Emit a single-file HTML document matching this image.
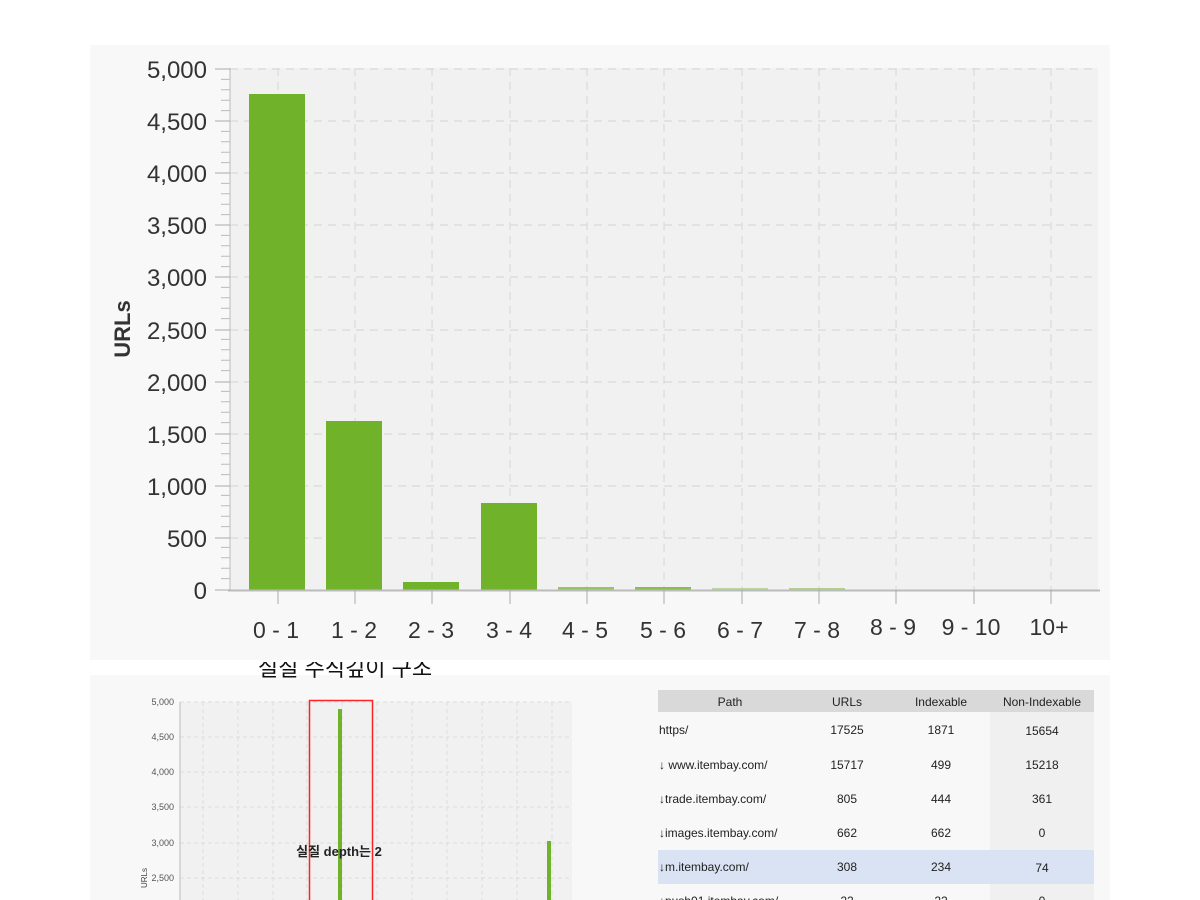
<!DOCTYPE html>
<html><head><meta charset="utf-8"><style>
body{margin:0;width:1200px;height:900px;background:#fff;overflow:hidden;position:relative;font-family:"Liberation Sans","Noto Sans CJK KR",sans-serif}
svg{position:absolute;left:0;top:0}
</style></head><body>
<svg width="1200" height="900" font-family="Liberation Sans, Noto Sans CJK KR, sans-serif">
<defs><clipPath id="tc"><rect x="90" y="662" width="600" height="20"/></clipPath></defs>
<!-- top card -->
<rect x="90" y="45" width="1020" height="615" fill="#f8f8f8"/>
<rect x="230" y="68" width="868" height="522" fill="#f1f1f1"/>
<g stroke="#dadada" stroke-width="1.2" stroke-dasharray="8,6">
<line x1="230" y1="69" x2="1098" y2="69"/><line x1="230" y1="121" x2="1098" y2="121"/><line x1="230" y1="173" x2="1098" y2="173"/><line x1="230" y1="225" x2="1098" y2="225"/><line x1="230" y1="277" x2="1098" y2="277"/><line x1="230" y1="330" x2="1098" y2="330"/><line x1="230" y1="382" x2="1098" y2="382"/><line x1="230" y1="434" x2="1098" y2="434"/><line x1="230" y1="486" x2="1098" y2="486"/><line x1="230" y1="538" x2="1098" y2="538"/>
<line x1="278" y1="68" x2="278" y2="590"/><line x1="355" y1="68" x2="355" y2="590"/><line x1="432" y1="68" x2="432" y2="590"/><line x1="510" y1="68" x2="510" y2="590"/><line x1="587" y1="68" x2="587" y2="590"/><line x1="664" y1="68" x2="664" y2="590"/><line x1="742" y1="68" x2="742" y2="590"/><line x1="819" y1="68" x2="819" y2="590"/><line x1="896" y1="68" x2="896" y2="590"/><line x1="974" y1="68" x2="974" y2="590"/><line x1="1051" y1="68" x2="1051" y2="590"/>
</g>
<g fill="#71b22b">
<rect x="249" y="94" width="56" height="496"/><rect x="326" y="421" width="56" height="169"/><rect x="403" y="582" width="56" height="8"/><rect x="481" y="503" width="56" height="87"/>
<rect x="558" y="587" width="56" height="3" opacity=".7"/><rect x="635" y="587" width="56" height="3" opacity=".8"/><rect x="712" y="588" width="56" height="2" opacity=".4"/><rect x="789" y="588" width="56" height="2" opacity=".5"/>
</g>
<line x1="230" y1="68" x2="230" y2="590" stroke="#bbb"/>
<line x1="228" y1="590.5" x2="1100" y2="590.5" stroke="#bbb" stroke-width="2"/>
<g stroke="#aaa">
<path d="M215 69h15M215 121h15M215 173h15M215 225h15M215 277h15M215 330h15M215 382h15M215 434h15M215 486h15M215 538h15M215 590h15"/>
<path d="M278 590v14M355 590v14M432 590v14M510 590v14M587 590v14M664 590v14M742 590v14M819 590v14M896 590v14M974 590v14M1051 590v14"/>
</g>
<g stroke="#bbb" id="minor"></g>
<path stroke="#bbb" d="M221 79.4h9M221 89.8h9M221 100.2h9M221 110.6h9M221 131.4h9M221 141.8h9M221 152.2h9M221 162.6h9M221 183.4h9M221 193.8h9M221 204.2h9M221 214.6h9M221 235.4h9M221 245.8h9M221 256.2h9M221 266.6h9M221 287.4h9M221 297.8h9M221 308.2h9M221 318.6h9M221 339.4h9M221 349.8h9M221 360.2h9M221 370.6h9M221 391.4h9M221 401.8h9M221 412.2h9M221 422.6h9M221 443.4h9M221 453.8h9M221 464.2h9M221 474.6h9M221 495.4h9M221 505.8h9M221 516.2h9M221 526.6h9M221 547.4h9M221 557.8h9M221 568.2h9M221 578.6h9"/>
<g fill="#333" font-size="24" text-anchor="end">
<text x="207" y="78">5,000</text><text x="207" y="130">4,500</text><text x="207" y="182">4,000</text><text x="207" y="234">3,500</text><text x="207" y="286">3,000</text><text x="207" y="339">2,500</text><text x="207" y="391">2,000</text><text x="207" y="443">1,500</text><text x="207" y="495">1,000</text><text x="207" y="547">500</text><text x="207" y="599">0</text>
</g>
<text transform="translate(130,329) rotate(-90)" text-anchor="middle" font-size="22" font-weight="bold" fill="#333">URLs</text>
<g fill="#333" font-size="23" text-anchor="middle">
<text x="276" y="638">0 - 1</text><text x="354" y="638">1 - 2</text><text x="431" y="638">2 - 3</text><text x="509" y="638">3 - 4</text><text x="585" y="638">4 - 5</text><text x="663" y="638">5 - 6</text><text x="740" y="638">6 - 7</text><text x="817" y="638">7 - 8</text><text x="893" y="635">8 - 9</text><text x="971" y="635">9 - 10</text><text x="1049" y="635">10+</text>
</g>
<!-- bottom card -->
<rect x="90" y="675" width="1020" height="225" fill="#f8f8f8"/>
<!-- clipped title -->
<g clip-path="url(#tc)"><text x="345" y="676" text-anchor="middle" font-size="22" fill="#111">실질 수직깊이 구조</text></g>
<rect x="180" y="702" width="392" height="198" fill="#f1f1f1"/>
<g stroke="#ddd" stroke-width="1" stroke-dasharray="4,3">
<line x1="180" y1="702" x2="572" y2="702"/><line x1="180" y1="737" x2="572" y2="737"/><line x1="180" y1="772" x2="572" y2="772"/><line x1="180" y1="807" x2="572" y2="807"/><line x1="180" y1="843" x2="572" y2="843"/><line x1="180" y1="878" x2="572" y2="878"/>
<line x1="203" y1="702" x2="203" y2="900"/><line x1="238" y1="702" x2="238" y2="900"/><line x1="273" y1="702" x2="273" y2="900"/><line x1="307" y1="702" x2="307" y2="900"/><line x1="342" y1="702" x2="342" y2="900"/><line x1="377" y1="702" x2="377" y2="900"/><line x1="412" y1="702" x2="412" y2="900"/><line x1="447" y1="702" x2="447" y2="900"/><line x1="482" y1="702" x2="482" y2="900"/><line x1="517" y1="702" x2="517" y2="900"/><line x1="552" y1="702" x2="552" y2="900"/>
</g>
<line x1="180" y1="702" x2="180" y2="900" stroke="#bbb"/>
<rect x="338" y="709" width="4" height="191" fill="#71b22b"/>
<rect x="547" y="841" width="4" height="59" fill="#71b22b"/>
<g fill="#555" font-size="9" text-anchor="end">
<text x="174" y="705">5,000</text><text x="174" y="740">4,500</text><text x="174" y="775">4,000</text><text x="174" y="810">3,500</text><text x="174" y="846">3,000</text><text x="174" y="881">2,500</text>
</g>
<text transform="translate(147,878) rotate(-90)" text-anchor="middle" font-size="8" fill="#444">URLs</text>
<rect x="309.5" y="700.5" width="63" height="205" fill="none" stroke="#f22" stroke-width="1.5"/>
<text x="339" y="856" text-anchor="middle" font-size="13" font-weight="bold" fill="#222">실질 depth는 2</text>
<!-- table -->
<rect x="990" y="712" width="104" height="188" fill="#f0f0f0"/>
<rect x="658" y="690" width="436" height="22" fill="#d9d9d9"/>
<rect x="658" y="850" width="436" height="34" fill="#dae3f3"/>
<g font-size="12" fill="#222" text-anchor="middle">
<text x="730" y="706">Path</text><text x="847" y="706">URLs</text><text x="941" y="706">Indexable</text><text x="1042" y="706">Non-Indexable</text>
<text x="847" y="734">17525</text><text x="941" y="734">1871</text><text x="1042" y="735">15654</text>
<text x="847" y="769">15717</text><text x="941" y="769">499</text><text x="1042" y="769">15218</text>
<text x="847" y="803">805</text><text x="941" y="803">444</text><text x="1042" y="803">361</text>
<text x="847" y="837">662</text><text x="941" y="837">662</text><text x="1042" y="837">0</text>
<text x="847" y="871">308</text><text x="941" y="871">234</text><text x="1042" y="872">74</text>
<text x="847" y="905">22</text><text x="941" y="905">22</text><text x="1042" y="905">0</text>
</g>
<g font-size="12" fill="#222">
<text x="659" y="734">https/</text><text x="659" y="769">↓ www.itembay.com/</text><text x="659" y="803">↓trade.itembay.com/</text><text x="659" y="837">↓images.itembay.com/</text><text x="659" y="871">↓m.itembay.com/</text><text x="659" y="905">↓push01.itembay.com/</text>
</g>
</svg>
</body></html>
